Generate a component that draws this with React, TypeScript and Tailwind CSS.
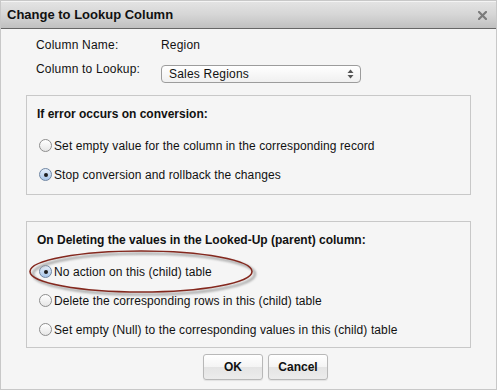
import { memo } from "react";

const font = { fontFamily: '"Liberation Sans", Arial, sans-serif' };

const Radio = memo(({ checked = false }: { checked?: boolean }) => (
  <span
    className={`relative inline-flex h-[13px] w-[13px] shrink-0 items-center justify-center rounded-full border ${
      checked
        ? "border-[#6f86a3] bg-[linear-gradient(#e4eefa,#a9c6e8)]"
        : "border-[#8d8d8d] bg-[linear-gradient(#ffffff,#e6e6e6)]"
    }`}
  >
    {checked && <span className="h-[4px] w-[4px] rounded-full bg-[#1d1d1d]" />}
  </span>
));

Radio.displayName = "Radio";

const Option = ({ label, checked }: { label: string; checked?: boolean }) => (
  <div className="flex h-[29px] items-center gap-[2px] pl-[12px] text-[12px] tracking-[0.1px] text-[#111]">
    <Radio checked={checked} />
    <span>{label}</span>
  </div>
);

const Button = ({ children }: { children: string }) => (
  <button className="h-[26px] w-[60px] rounded-[3px] border border-[#b8b8b8] bg-[linear-gradient(#ffffff_0%,#f4f4f4_50%,#e4e4e4_51%,#ececec_100%)] text-[12px] font-bold text-[#111] shadow-[0_1px_1px_rgba(0,0,0,0.08)]">
    {children}
  </button>
);

const App = () => {
  return (
    <div
      className="relative flex h-[390px] w-[497px] flex-col border border-[#c8c8c8] bg-[#f5f5f5]"
      style={font}
    >
      {/* Title bar */}
      <header className="flex h-[28px] shrink-0 items-center justify-between border-b border-[#666] bg-[linear-gradient(#e4e4e4,#d6d6d6_50%,#c0c0c0)] pl-[6px] pr-[9px] shadow-[inset_0_1px_0_#f4f4f4]">
        <span className="text-[13px] font-bold text-[#111]">Change to Lookup Column</span>
        <svg width="9" height="9" viewBox="0 0 9 9" className="mt-[1px]">
          <path d="M1 1 L8 8 M8 1 L1 8" stroke="#7b7b7b" strokeWidth="2.2" strokeLinecap="square" />
        </svg>
      </header>

      {/* Body */}
      <div className="flex flex-col px-[25px] pt-[8px]">
        <div className="flex h-[16px] items-center pl-[10px] text-[12px] tracking-[0.2px] text-[#111]">
          <span className="w-[125px]">Column Name:</span>
          <span>Region</span>
        </div>

        <div className="mt-[8px] flex items-start pl-[10px] text-[12px] tracking-[0.2px] text-[#111]">
          <span className="w-[125px] leading-[16px]">Column to Lookup:</span>
          <div className="mt-[4px] flex h-[18px] w-[200px] items-center justify-between rounded-[4px] border border-[#9c9c9c] bg-[linear-gradient(#ffffff,#f0f0f0)] pl-[7px] pr-[6px]">
            <span className="text-[12px]">Sales Regions</span>
            <svg width="7" height="10" viewBox="0 0 7 10">
              <path d="M3.5 0.5 L6.5 4 L0.5 4 Z" fill="#555" />
              <path d="M3.5 9.5 L6.5 6 L0.5 6 Z" fill="#555" />
            </svg>
          </div>
        </div>

        {/* Conversion errors */}
        <section className="mt-[12px] border border-[#c8c8c8] pb-[5px] pt-[11px]">
          <h3 className="h-[15px] pl-[10px] text-[12px] font-bold leading-[15px] text-[#111]">
            If error occurs on conversion:
          </h3>
          <div className="mt-[9px]">
            <Option label="Set empty value for the column in the corresponding record" />
            <Option label="Stop conversion and rollback the changes" checked />
          </div>
        </section>

        {/* Delete behaviour */}
        <section className="mt-[26px] border border-[#c8c8c8] pb-[3px] pt-[11px]">
          <h3 className="h-[15px] pl-[10px] text-[12px] font-bold leading-[15px] text-[#111]">
            On Deleting the values in the Looked-Up (parent) column:
          </h3>
          <div className="mt-[9px]">
            <Option label="No action on this (child) table" checked />
            <Option label="Delete the corresponding rows in this (child) table" />
            <Option label="Set empty (Null) to the corresponding values in this (child) table" />
          </div>
        </section>

        <div className="mt-[6px] flex gap-[5px] pl-[177px]">
          <Button>OK</Button>
          <Button>Cancel</Button>
        </div>
      </div>

      {/* Annotation ellipse */}
      <svg
        className="pointer-events-none absolute left-[24px] top-[245px]"
        width="236"
        height="54"
        viewBox="0 0 236 54"
      >
        <defs>
          <filter id="blur" x="-10%" y="-30%" width="120%" height="160%">
            <feGaussianBlur stdDeviation="1.2" />
          </filter>
        </defs>
        <ellipse cx="119" cy="28" rx="111" ry="20.5" fill="none" stroke="#9a9a9a" strokeWidth="2.5" filter="url(#blur)" opacity="0.8" />
        <ellipse cx="116" cy="25.5" rx="111" ry="20.5" fill="none" stroke="#84281e" strokeWidth="1.6" />
      </svg>
    </div>
  );
};

export default memo(App);
